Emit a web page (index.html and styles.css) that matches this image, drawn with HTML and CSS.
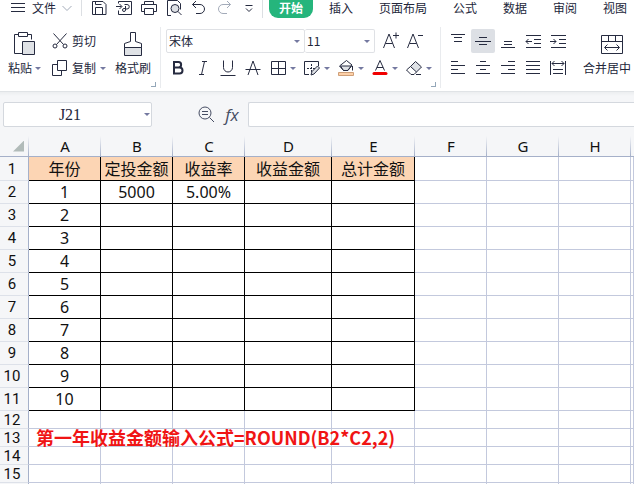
FILE: index.html
```html
<!DOCTYPE html>
<html lang="zh-CN">
<head>
<meta charset="utf-8">
<title>表格</title>
<link rel="stylesheet" href="styles.css">
</head>
<body>
<header class="menubar">
  <button class="file"><svg width="16" height="16" viewBox="0 0 16 16"><path d="M1 3.500h14M1 7.500h14M1 11.500h14"/></svg><span>文件</span><svg class="soft" width="10" height="8" viewBox="0 0 10 8"><path d="M.5 2L5 6.500 9.500 2"/></svg></button>
  <div class="quick">
    <button aria-label="保存"><svg width="16" height="16" viewBox="0 0 16 16"><path d="M1.500 1.500h10.500l3 3v10h-13.500zM4.500 1.500v3h6M4.500 14.500v-7h7v7"/></svg></button>
    <button aria-label="输出"><svg width="16" height="16" viewBox="0 0 16 16"><path d="M2.500 3.500v-2h13v13h-13v-4M0 6.500h5.500M3.500 4l2.500 2.500L3.500 9M8.500 4.500h2.500a2 2 0 0 1 0 4.500H9.500M9.500 6v4a1.500 1.500 0 1 1-1.500-1.500h2"/></svg></button>
    <button aria-label="打印"><svg width="16" height="16" viewBox="0 0 16 16"><path d="M3.500 4.500v-3h9v3M3.500 11.500h-3v-7h15v7h-3M3.500 8.500h9v6h-9z"/></svg></button>
    <button aria-label="打印预览"><svg width="16" height="16" viewBox="0 0 16 16"><path d="M5 15.500H1.500v-15h10l3 3v6"/><circle class="tint" cx="9" cy="8.500" r="4"/><path d="M12 11.500l3.500 3.500"/></svg></button>
    <button aria-label="撤销"><svg width="16" height="16" viewBox="0 0 16 16"><path d="M5 1L1.500 4.500 5 8M1.500 4.500h7.500a4.500 4.500 0 0 1 0 9H5"/></svg></button>
    <button aria-label="恢复"><svg class="soft" width="16" height="16" viewBox="0 0 16 16"><path d="M11 1l3.500 3.500L11 8M14.500 4.500H7a4.500 4.500 0 0 0 0 9h4"/></svg></button>
    <button aria-label="自定义"><svg width="10" height="10" viewBox="0 0 10 10"><path d="M1.500 2.500h7M2 5.500l3 3 3-3"/></svg></button>
  </div>
  <nav class="tabs">
    <a class="current" href="#home">开始</a><a href="#insert">插入</a><a href="#layout">页面布局</a><a href="#formula">公式</a><a href="#data">数据</a><a href="#review">审阅</a><a href="#view">视图</a>
  </nav>
</header>

<section class="ribbon">
  <div class="group clipboard">
    <button class="large"><svg width="24" height="24" viewBox="0 0 24 24"><path d="M9 21.500H1.500v-19h4M14.500 2.500h4v5M5.500.5h9v4h-9z"/><path class="tint" d="M9.500 9.500h12v13h-12z"/></svg><span class="label">粘贴<i class="arrow"></i></span></button>
    <div class="rows">
      <button class="line"><svg width="16" height="16" viewBox="0 0 16 16"><path d="M1.500.5l10 11M14.500.5l-10 11"/><circle cx="3" cy="13" r="2"/><circle cx="13" cy="13" r="2"/></svg>剪切</button>
      <button class="line"><svg width="16" height="16" viewBox="0 0 16 16"><path d="M5.500.5h9v10h-9zM5.500 4.500h-5v11h9v-5"/></svg>复制<i class="arrow"></i></button>
    </div>
    <button class="large"><svg width="24" height="24" viewBox="0 0 24 24"><path class="tint" d="M3.500 15.500h17v8h-17z"/><path d="M9.500.5h5v9l6 2v4h-17v-4l6-2z"/></svg><span class="label">格式刷</span></button>
    <span class="corner"></span>
  </div>
  <div class="group rows font">
    <div class="row">
      <label class="pick family"><select aria-label="字体"><option>宋体</option></select><i class="arrow"></i></label>
      <label class="pick size"><select aria-label="字号"><option>11</option></select><i class="arrow"></i></label>
      <div class="row scale">
        <button aria-label="增大字号"><svg width="18" height="18" viewBox="0 0 18 18"><path d="M1.500 16L7 2l5.500 14M3.500 11.500h7M11 3.500h6M14 .5v6"/></svg></button>
        <button aria-label="减小字号"><svg width="18" height="18" viewBox="0 0 18 18"><path d="M1.500 16L7 2l5.500 14M3.500 11.500h7M12 3.500h5"/></svg></button>
      </div>
    </div>
    <div class="row tools">
      <button aria-label="加粗"><svg class="bold" width="16" height="16" viewBox="0 0 16 16"><path d="M4 2h4.500c3.500 0 3.500 5.500 0 5.500H4zM4 7.500h5.500c4 0 4 6 0 6H4z"/></svg></button>
      <button aria-label="倾斜"><svg width="16" height="16" viewBox="0 0 16 16"><path d="M7 1.500h5M4 14.500h5M9.500 1.500l-3 13"/></svg></button>
      <button aria-label="下划线"><svg width="16" height="16" viewBox="0 0 16 16"><path d="M3.500.5v7a4.500 4.500 0 0 0 9 0v-7M.5 15.500h15"/></svg></button>
      <button aria-label="删除线"><svg width="16" height="16" viewBox="0 0 16 16"><path d="M3 15L8 1l5 14M.5 9.500h15"/></svg></button>
      <button class="split" aria-label="边框"><svg width="16" height="16" viewBox="0 0 16 16"><path d="M1.500 1.500h14v13h-14zM8.500 1.500v13M1.500 8.500h14"/></svg><i class="arrow"></i></button>
      <button class="split" aria-label="绘图边框"><svg width="16" height="16" viewBox="0 0 16 16"><path d="M5 14.500H.5v-13h14V6"/><path class="dots" d="M7.500 4v9M3 8.500h9"/><path class="tint" d="M7 15l1-3.500L13.500 6l2 2L10 14z"/></svg><i class="arrow"></i></button>
      <button class="split" aria-label="填充颜色"><svg width="16" height="16" viewBox="0 0 16 16"><path class="tint" d="M2.500 6h11l-4 4.500h-4z"/><path d="M8.500.5L1.500 6l4 4.500h4.500L14 5zM14.500 6v4.500"/><path class="peach" d="M.5 12.500h15v3H.5z"/></svg><i class="arrow"></i></button>
      <button class="split" aria-label="字体颜色"><svg width="16" height="16" viewBox="0 0 16 16"><path d="M3.500 10.500L8 .5l4.500 10M5 7.500h6"/><path class="red" d="M2 12h12a1 1 0 0 1 0 3H2a1 1 0 0 1 0-3z"/></svg><i class="arrow"></i></button>
      <button class="split" aria-label="清除"><svg width="16" height="16" viewBox="0 0 16 16"><path class="tint" d="M9.500 1.500l6 5.500-5 5-6-5.500z"/><path d="M4.500 6.500l-4 3.500 4.500 4.500h3l2.500-2.500M10 14.500h5"/></svg><i class="arrow"></i></button>
    </div>
    <span class="corner"></span>
  </div>
  <div class="group align">
    <div class="rows">
      <div class="row tools">
        <button aria-label="顶端对齐"><svg width="16" height="16" viewBox="0 0 16 16"><path d="M1 1.500h14M4 4.500h8M4 8.500h8"/></svg></button>
        <button class="active" aria-label="垂直居中"><svg width="16" height="16" viewBox="0 0 16 16"><path d="M4 4.500h8M0 8.500h16M4 11.500h8"/></svg></button>
        <button aria-label="底端对齐"><svg width="16" height="16" viewBox="0 0 16 16"><path d="M4 8.500h8M4 11.500h8M1 14.500h14"/></svg></button>
        <button aria-label="减少缩进"><svg width="16" height="16" viewBox="0 0 16 16"><path d="M1 2.500h15M9 6.500h7M9 10.500h7M1 14.500h15M1 8.500h6M3.500 6L1 8.500 3.500 11"/></svg></button>
        <button aria-label="增加缩进"><svg width="16" height="16" viewBox="0 0 16 16"><path d="M1 2.500h15M9 6.500h7M9 10.500h7M1 14.500h15M0 8.500h6M3.500 6L6 8.500 3.500 11"/></svg></button>
      </div>
      <div class="row tools">
        <button aria-label="左对齐"><svg width="16" height="16" viewBox="0 0 16 16"><path d="M1 1.500h7M1 5.500h14M1 9.500h7M1 13.500h14"/></svg></button>
        <button aria-label="水平居中"><svg width="16" height="16" viewBox="0 0 16 16"><path d="M5 1.500h6M1 5.500h14M5 9.500h6M1 13.500h14"/></svg></button>
        <button aria-label="右对齐"><svg width="16" height="16" viewBox="0 0 16 16"><path d="M8 1.500h7M1 5.500h14M8 9.500h7M1 13.500h14"/></svg></button>
        <button aria-label="两端对齐"><svg width="16" height="16" viewBox="0 0 16 16"><path d="M1 1.500h14M1 5.500h14M1 9.500h14M1 13.500h14"/></svg></button>
        <button aria-label="分散对齐"><svg width="16" height="16" viewBox="0 0 16 16"><path d="M.5 1v14M15.500 1v14M2 3.500h12M4.500 1L2 3.500 4.500 6M11.500 1L14 3.500 11.500 6M3 9.500h10M3 13.500h10"/></svg></button>
      </div>
    </div>
    <button class="large merge"><svg width="24" height="24" viewBox="0 0 24 24"><path d="M1.500 3.500h21v18h-21zM1.500 9.500h21M8.500 3.500v6M15.500 3.500v6M5 15.500h14M7.500 12.500l-3 3 3 3M16.500 12.500l3 3-3 3"/></svg><span class="label">合并居中<i class="arrow"></i></span></button>
  </div>
</section>

<section class="formula">
  <label class="pick cellname"><input type="text" value="J21" aria-label="名称框"><i class="arrow"></i></label>
  <div class="row fx">
    <button aria-label="查找"><svg width="18" height="18" viewBox="0 0 18 18"><circle cx="8" cy="8" r="6"/><path d="M12.500 12.500l4.500 4.500M5 6.500h6M5 9.500h6"/></svg></button>
    <button class="fn">fx</button>
  </div>
  <input class="expr" type="text" aria-label="编辑栏">
</section>

<main class="sheet">
  <table>
    <colgroup><col class="n"><col class="m"><col class="m"><col class="m"><col class="d"><col class="e"><col class="m"><col class="m"><col class="m"><col></colgroup>
    <thead><tr><th class="all"></th><th>A</th><th>B</th><th>C</th><th>D</th><th>E</th><th>F</th><th>G</th><th>H</th><th></th></tr></thead>
    <tbody class="data">
      <tr class="title"><th>1</th><td>年份</td><td>定投金额</td><td>收益率</td><td>收益金额</td><td>总计金额</td><td></td><td></td><td></td><td></td></tr>
      <tr><th>2</th><td>1</td><td>5000</td><td>5.00%</td><td></td><td></td><td></td><td></td><td></td><td></td></tr>
      <tr><th>3</th><td>2</td><td></td><td></td><td></td><td></td><td></td><td></td><td></td><td></td></tr>
      <tr><th>4</th><td>3</td><td></td><td></td><td></td><td></td><td></td><td></td><td></td><td></td></tr>
      <tr><th>5</th><td>4</td><td></td><td></td><td></td><td></td><td></td><td></td><td></td><td></td></tr>
      <tr><th>6</th><td>5</td><td></td><td></td><td></td><td></td><td></td><td></td><td></td><td></td></tr>
      <tr><th>7</th><td>6</td><td></td><td></td><td></td><td></td><td></td><td></td><td></td><td></td></tr>
      <tr><th>8</th><td>7</td><td></td><td></td><td></td><td></td><td></td><td></td><td></td><td></td></tr>
      <tr><th>9</th><td>8</td><td></td><td></td><td></td><td></td><td></td><td></td><td></td><td></td></tr>
      <tr><th>10</th><td>9</td><td></td><td></td><td></td><td></td><td></td><td></td><td></td><td></td></tr>
      <tr><th>11</th><td>10</td><td></td><td></td><td></td><td></td><td></td><td></td><td></td><td></td></tr>
    </tbody>
    <tbody class="blank">
      <tr><th>12</th><td></td><td></td><td></td><td></td><td></td><td></td><td></td><td></td><td></td></tr>
      <tr><th>13</th><td></td><td></td><td></td><td></td><td></td><td></td><td></td><td></td><td></td></tr>
      <tr><th>14</th><td></td><td></td><td></td><td></td><td></td><td></td><td></td><td></td><td></td></tr>
      <tr><th>15</th><td></td><td></td><td></td><td></td><td></td><td></td><td></td><td></td><td></td></tr>
      <tr><th></th><td></td><td></td><td></td><td></td><td></td><td></td><td></td><td></td><td></td></tr>
    </tbody>
  </table>
  <p class="note">第一年收益金额输入公式=ROUND(B2*C2,2)</p>
</main>
</body>
</html>
```
FILE: styles.css
```css
* { box-sizing: border-box; }
html, body { height: 100%; }
body {
  margin: 0;
  overflow: hidden;
  background: #fff;
  color: #22263a;
  font: 12px/18px "Noto Sans CJK SC", sans-serif;
}
button, input, select { font: inherit; color: inherit; }
button {
  display: flex;
  align-items: center;
  justify-content: center;
  margin: 0;
  padding: 0;
  border: 0;
  background: none;
  white-space: nowrap;
}
svg { flex: none; fill: none; stroke: #262b40; }
.soft { stroke: #a3abb9; }
.tint { fill: #dfe2e6; }
.bold { stroke-width: 2; }
.dots { stroke-dasharray: 2 1; }
.peach { fill: #fcd0a8; stroke: #cf9f78; }
.red { fill: #f00000; stroke: none; }
.arrow {
  flex: none;
  border: 3px solid transparent;
  border-top-color: #7479a0;
  border-bottom: 0;
}

.menubar { display: flex; height: 18px; align-items: flex-start; }
.file { flex: none; width: 82px; height: 16px; gap: 6px; padding-left: 10px; justify-content: flex-start; border-right: 1px solid #dcdfe3; }
.quick {
  display: grid;
  grid-template-columns: repeat(7, 1fr);
  flex: none;
  width: 181px;
  height: 18px;
  padding: 0 1px 0 4px;
  border-right: 1px solid #dcdfe3;
}
.quick button { height: 16px; }
.tabs { display: flex; gap: 6px; margin-left: 6px; }
.tabs a {
  height: 18px;
  padding: 0 10px;
  border-radius: 0 0 9px 9px;
  color: inherit;
  line-height: 16px;
  text-decoration: none;
  white-space: nowrap;
}
.tabs .current { background: #25b57c; color: #fff; font-weight: 700; }

.ribbon { display: flex; padding: 9px 0 3px; overflow: hidden; border-bottom: 1px solid #e0e3e6; }
.group { position: relative; display: flex; flex: none; height: 61px; padding-top: 2px; border-right: 1px solid #e9ebee; }
.rows { display: flex; flex-direction: column; gap: 3px; }
.row { display: flex; align-items: center; }
.clipboard { padding-left: 8px; padding-right: 9px; }
.clipboard .rows { width: 54px; margin: 0 9px 0 11px; }
.large { flex-direction: column; justify-content: flex-start; align-self: flex-start; padding-top: 3px; }
.label, .line { display: flex; align-items: center; gap: 3px; height: 24px; }
.line { gap: 4px; justify-content: flex-start; }
.corner {
  position: absolute;
  right: 4px;
  bottom: 1px;
  width: 5px;
  height: 5px;
  border: solid #93a6b8;
  border-width: 0 1px 1px 0;
}
.font { padding-left: 5px; padding-right: 5px; }
.pick {
  display: flex;
  align-items: center;
  height: 24px;
  padding-right: 4px;
  border: 1px solid #dfe1e5;
  border-radius: 2px;
  background: #fff;
}
.pick select, .pick input { flex: 1; min-width: 0; height: 22px; padding: 0 2px; border: 0; background: none; appearance: none; }
.family { width: 139px; }
.size { width: 70px; border-left: 0; }
.scale { margin-left: 4px; }
.row button { width: 24px; height: 24px; }
.tools { gap: 1px; }
.tools .split { width: 33px; gap: 4px; padding-left: 4px; justify-content: flex-start; }
.tools .active { border-radius: 2px; background: #dde0e5; }
.align { padding-left: 5px; border: 0; }
.merge { margin-left: 13px; }

.formula {
  display: flex;
  align-items: center;
  height: 44px;
  padding-left: 3px;
  background: linear-gradient(#eceef0, #f5f6f8 4px);
}
.formula .cellname { width: 149px; height: 25px; padding-right: 1px; border-color: #d4d8de; }
.formula .cellname input { padding: 2px 8px 0 0; text-align: center; font: 16px "Liberation Serif", serif; }
.fx { gap: 2px; margin: 0 4px 0 42px; }
.fx svg { stroke: #464d63; }
.fx .fn { color: #464d63; font: italic 17px "Open Sans", sans-serif; }
.expr { flex: 1; min-width: 0; height: 25px; border: 1px solid #d4d8de; border-right: 0; border-radius: 2px 0 0 2px; background: #fff; }

.sheet { position: relative; overflow: hidden; }
table { width: 100%; table-layout: fixed; border-spacing: 0; font: 15px/16px "Noto Sans", "Noto Sans CJK SC", sans-serif; color: #111; }
.n { width: 29px; }
.m { width: 72px; }
.d { width: 87px; }
.e { width: 83px; }
th, td { height: 18px; padding: 0; text-align: center; white-space: nowrap; border: solid #c3c9dd; border-width: 0 1px 1px 0; }
th { font-weight: 400; background: #f5f6f8; }
thead th {
  height: 21px;
  border-right: 0;
  border-bottom-color: #a5b0c9;
  background: linear-gradient(#f5f6f8, #a5b0c9) right / 1px 100% no-repeat #f5f6f8;
}
thead th:last-child { background: #f5f6f8; }
tbody th { padding-right: 4px; border-right-color: #a5b0c9; border-bottom-color: #dde1e9; font-family: Roboto, sans-serif; }
.all::after {
  content: "";
  display: block;
  margin-left: 13px;
  width: 11px;
  height: 11px;
  background: #b1bbb9;
  clip-path: polygon(100% 0, 100% 100%, 0 100%);
}
.data th, .data td { height: 23px; }
.data .title th, .data .title td { height: 24px; }
.data td { font-size: 16px; }
.data td:nth-child(-n+6) { border-color: #000; }
.title td:nth-child(-n+6) { background: #fcd5b4; }
.note {
  position: absolute;
  left: 36px;
  bottom: 52px;
  margin: 0;
  color: #f01414;
  font: 700 18px/24px "Noto Sans CJK SC", sans-serif;
}
```
